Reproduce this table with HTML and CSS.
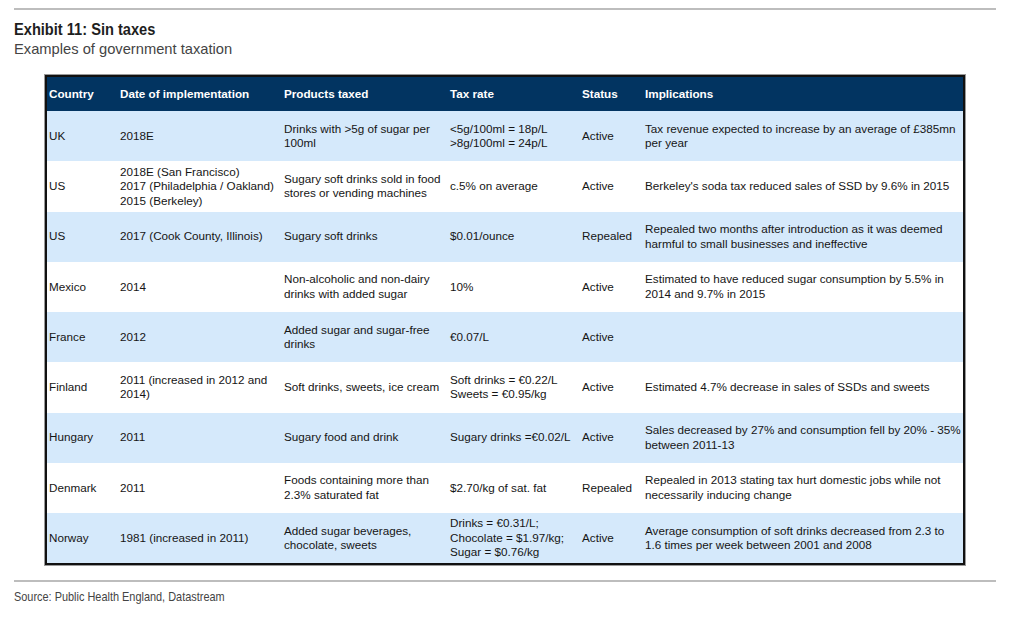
FILE: index.html
```html
<!DOCTYPE html>
<html>
<head>
<meta charset="utf-8">
<link rel="stylesheet" href="styles.css">
</head>
<body>
<div class="page">
  <div class="rule"></div>
  <h1 class="title"><span class="squeeze t">Exhibit 11: Sin taxes</span></h1>
  <div class="subtitle"><span class="squeeze s">Examples of government taxation</span></div>
  <div class="table-wrap">
    <table class="data">
      <colgroup>
        <col class="c1"><col class="c2"><col class="c3"><col class="c4"><col class="c5"><col class="c6">
      </colgroup>
      <thead>
        <tr><th>Country</th><th>Date of implementation</th><th>Products taxed</th><th>Tax rate</th><th>Status</th><th>Implications</th></tr>
      </thead>
      <tbody>
        <tr class="alt"><td>UK</td><td>2018E</td><td>Drinks with &gt;5g of sugar per<br>100ml</td><td>&lt;5g/100ml = 18p/L<br>&gt;8g/100ml = 24p/L</td><td>Active</td><td>Tax revenue expected to increase by an average of £385mn<br>per year</td></tr>
        <tr><td>US</td><td>2018E (San Francisco)<br>2017 (Philadelphia / Oakland)<br>2015 (Berkeley)</td><td>Sugary soft drinks sold in food<br>stores or vending machines</td><td>c.5% on average</td><td>Active</td><td>Berkeley's soda tax reduced sales of SSD by 9.6% in 2015</td></tr>
        <tr class="alt"><td>US</td><td>2017 (Cook County, Illinois)</td><td>Sugary soft drinks</td><td>$0.01/ounce</td><td>Repealed</td><td>Repealed two months after introduction as it was deemed<br>harmful to small businesses and ineffective</td></tr>
        <tr><td>Mexico</td><td>2014</td><td>Non-alcoholic and non-dairy<br>drinks with added sugar</td><td>10%</td><td>Active</td><td>Estimated to have reduced sugar consumption by 5.5% in<br>2014 and 9.7% in 2015</td></tr>
        <tr class="alt"><td>France</td><td>2012</td><td>Added sugar and sugar-free<br>drinks</td><td>€0.07/L</td><td>Active</td><td></td></tr>
        <tr><td>Finland</td><td>2011 (increased in 2012 and<br>2014)</td><td>Soft drinks, sweets, ice cream</td><td>Soft drinks = €0.22/L<br>Sweets = €0.95/kg</td><td>Active</td><td>Estimated 4.7% decrease in sales of SSDs and sweets</td></tr>
        <tr class="alt"><td>Hungary</td><td>2011</td><td>Sugary food and drink</td><td>Sugary drinks =€0.02/L</td><td>Active</td><td>Sales decreased by 27% and consumption fell by 20% - 35%<br>between 2011-13</td></tr>
        <tr><td>Denmark</td><td>2011</td><td>Foods containing more than<br>2.3% saturated fat</td><td>$2.70/kg of sat. fat</td><td>Repealed</td><td>Repealed in 2013 stating tax hurt domestic jobs while not<br>necessarily inducing change</td></tr>
        <tr class="alt"><td>Norway</td><td>1981 (increased in 2011)</td><td>Added sugar beverages,<br>chocolate, sweets</td><td>Drinks = €0.31/L;<br>Chocolate = $1.97/kg;<br>Sugar = $0.76/kg</td><td>Active</td><td>Average consumption of soft drinks decreased from 2.3 to<br>1.6 times per week between 2001 and 2008</td></tr>
      </tbody>
    </table>
  </div>
  <div class="rule bottom"></div>
  <div class="source"><span class="squeeze src">Source: Public Health England, Datastream</span></div>
</div>
</body>
</html>
```

FILE: styles.css
```css
html, body {
  margin: 0;
  padding: 0;
  background: #ffffff;
}
.page {
  padding: 8px 28px 0 14px;
  width: 982px;
}
.rule {
  height: 2px;
  background: #bdbdbd;
}
.squeeze {
  display: inline-block;
  transform-origin: left center;
  white-space: nowrap;
}
.squeeze.t { transform: scaleX(0.86); }
.squeeze.s { transform: scaleX(0.98); }
.squeeze.src { transform: scaleX(0.84); }
.title {
  margin: 10px 0 0 0;
  font-family: "Liberation Sans", Arial, sans-serif;
  font-weight: bold;
  font-size: 17px;
  line-height: 19px;
  color: #1e1e1e;
}
.subtitle {
  font-family: "Liberation Sans", Arial, sans-serif;
  font-size: 15px;
  line-height: 19px;
  color: #444444;
}
.table-wrap {
  margin: 17px 0 0 31px;
  width: 920px;
}
.data {
  width: 920px;
  border-collapse: collapse;
  border: 2px solid #111111;
  box-shadow: 0 0 0 1px #9a9a9a;
  table-layout: fixed;
  font-family: "Liberation Sans", Arial, sans-serif;
  font-size: 11.7px;
  line-height: 14.5px;
  color: #151515;
}
.c1 { width: 70px; }
.c2 { width: 164px; }
.c3 { width: 166px; }
.c4 { width: 132px; }
.c5 { width: 63px; }
.c6 { width: auto; }
.data th {
  background: #023461;
  color: #ffffff;
  font-weight: bold;
  text-align: left;
  height: 34px;
  padding: 0 0 0 4px;
  vertical-align: middle;
}
.data td {
  height: 50.25px;
  padding: 0 0 0 4px;
  vertical-align: middle;
  white-space: nowrap;
}
.data th:first-child, .data td:first-child { padding-left: 2px; }
.data tr.alt td {
  background: #d5e9fb;
}
.rule.bottom {
  margin-top: 15px;
  height: 2px;
}
.source {
  margin-top: 7px;
  font-family: "Liberation Sans", Arial, sans-serif;
  font-size: 13px;
  line-height: 16px;
  color: #444444;
}
```
